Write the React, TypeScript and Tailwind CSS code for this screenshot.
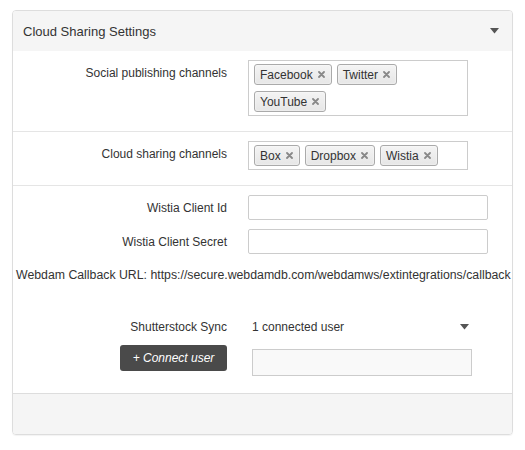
import React from "react";

const Caret = ({ className = "" }: { className?: string }) => (
  <svg width="9" height="6" viewBox="0 0 9 6" className={className}>
    <path d="M0 0 L9 0 L4.5 5.5 Z" fill="#555" />
  </svg>
);

const Tag = ({ label }: { label: string }) => (
  <span className="inline-flex items-center h-[21px] pl-[5px] pr-[6px] rounded-[3px] border border-[#aaa] bg-gradient-to-b from-[#f4f4f4] to-[#e6e6e6] text-[12px] text-[#333] leading-none shadow-[inset_0_0_2px_#fff]">
    {label}
    <svg width="7" height="7" viewBox="0 0 7 7" className="ml-[5px]">
      <path d="M1 1 L6 6 M6 1 L1 6" stroke="#888" strokeWidth="1.8" strokeLinecap="round" />
    </svg>
  </span>
);

export default function App() {
  return (
    <div className="w-[525px] h-[450px] bg-white pt-[10px] pl-[12px] font-['Liberation_Sans',Arial,sans-serif] text-[#333]">
      <div className="w-[501px] border border-[#ddd] rounded-[4px] shadow-[0_1px_1px_rgba(0,0,0,0.05)] overflow-hidden">
        {/* header */}
        <div className="h-[40px] bg-[#f5f5f5] flex items-center justify-between pl-[10px] pr-[13px]">
          <span className="text-[13px] text-[#333] mt-[1px]">Cloud Sharing Settings</span>
          <Caret />
        </div>

        {/* Social */}
        <div className="flex pt-[9px] pb-[15px] border-b border-[#e5e5e5]">
          <div className="w-[214px] text-right text-[12px] pt-[4px]">Social publishing channels</div>
          <div className="ml-[21px] w-[220px] h-[56px] border border-[#ccc] pl-[5px] pr-[5px] pt-[3px] flex flex-wrap content-start gap-x-[5px] gap-y-[6px]">
            <Tag label="Facebook" />
            <Tag label="Twitter" />
            <Tag label="YouTube" />
          </div>
        </div>

        {/* Cloud */}
        <div className="flex pt-[9px] pb-[15px] border-b border-[#e5e5e5]">
          <div className="w-[214px] text-right text-[12px] pt-[4px]">Cloud sharing channels</div>
          <div className="ml-[21px] w-[220px] h-[29px] border border-[#ccc] pl-[5px] pt-[3px] flex flex-wrap content-start gap-x-[5px]">
            <Tag label="Box" />
            <Tag label="Dropbox" />
            <Tag label="Wistia" />
          </div>
        </div>

        {/* Wistia */}
        <div className="pt-[9px]">
          <div className="flex items-center">
            <div className="w-[214px] text-right text-[12px]">Wistia Client Id</div>
            <div className="ml-[21px] w-[240px] h-[25px] border border-[#ccc] rounded-[2px] bg-white" />
          </div>
          <div className="flex items-center mt-[9px]">
            <div className="w-[214px] text-right text-[12px]">Wistia Client Secret</div>
            <div className="ml-[21px] w-[240px] h-[25px] border border-[#ccc] rounded-[2px] bg-white" />
          </div>
          <div className="mt-[12px] pl-[3px] text-[12.3px] leading-[18px] whitespace-nowrap">
            Webdam Callback URL: https://secure.webdamdb.com/webdamws/extintegrations/callback
          </div>
        </div>

        {/* Shutterstock */}
        <div className="pt-[33px] pb-[17px]">
          <div className="flex items-center h-[20px]">
            <div className="w-[214px] text-right text-[12px]">Shutterstock Sync</div>
            <div className="ml-[25px] w-[220px] flex items-center justify-between pr-[3px]">
              <span className="text-[12px]">1 connected user</span>
              <Caret />
            </div>
          </div>
          <div className="flex items-start mt-[8px]">
            <div className="w-[214px] flex justify-end">
              <button className="w-[107px] h-[26px] rounded-[3px] bg-[#4a4a4a] text-white italic text-[12px]">+ Connect user</button>
            </div>
            <div className="ml-[25px] mt-[4px] w-[220px] h-[27px] border border-[#ccc] bg-[#f9f9f9]" />
          </div>
        </div>

        {/* footer */}
        <div className="h-[41px] bg-[#f5f5f5] border-t border-[#ddd]" />
      </div>
    </div>
  );
}
